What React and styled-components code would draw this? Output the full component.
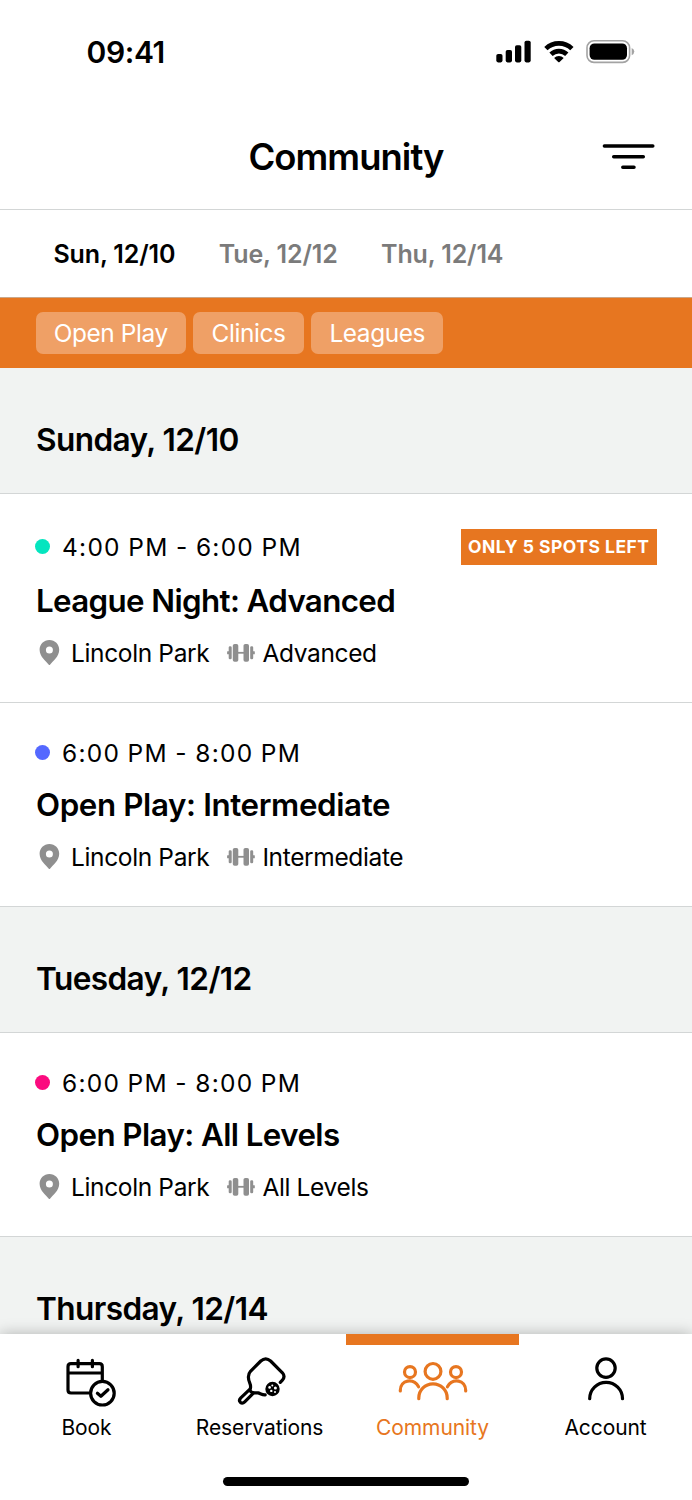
import React from "react";
import styled, { createGlobalStyle } from "styled-components";

const ORANGE = "#e77620";
const LINE = "#d3d6d6";

const GlobalStyle = createGlobalStyle`
  *, *::before, *::after { box-sizing: border-box; }
  body {
    margin: 0;
    background: #fff;
    color: #000;
    font-family: Inter, "Liberation Sans", sans-serif;
  }
`;

const Screen = styled.div`
  display: flex;
  flex-direction: column;
  width: 692px;
  height: 1500px;
  overflow: hidden;
  background: #fff;
`;

const StatusBar = styled.div`
  flex: none;
  display: flex;
  align-items: center;
  justify-content: space-between;
  height: 104px;
  padding: 0 56px 0 86.6px;
`;

const Clock = styled.span`
  font-size: 30px;
  line-height: 36px;
  font-weight: 600;
  letter-spacing: -0.4px;
`;

const StatusIcons = styled.div`
  display: flex;
  align-items: center;
  height: 24px;
  gap: 12px;
`;

const Header = styled.header`
  flex: none;
  display: grid;
  grid-template-columns: 1fr auto 1fr;
  align-items: center;
  height: 106px;
  padding: 0 36px;
  border-bottom: 1px solid ${LINE};
`;

const PageTitle = styled.h1`
  grid-column: 2;
  margin: 0;
  font-size: 36.4px;
  line-height: 44px;
  font-weight: 600;
  letter-spacing: -0.95px;
`;

const FilterButton = styled.button`
  justify-self: end;
  display: flex;
  padding: 0;
  border: 0;
  background: none;
`;

const DateTabs = styled.nav`
  flex: none;
  display: flex;
  align-items: center;
  gap: 43.5px;
  height: 88px;
  padding: 0 53.5px;
  border-bottom: 1px solid #c9a88c;
`;

const DateTab = styled.a`
  font-size: 25px;
  line-height: 32px;
  font-weight: 600;
  letter-spacing: -0.15px;
  color: ${(p) => (p.$active ? "#000" : "#7b7b7b")};
`;

const ChipBar = styled.div`
  flex: none;
  display: flex;
  align-items: center;
  gap: 7.5px;
  height: 70px;
  padding: 0 35.5px;
  background: ${ORANGE};
`;

const Chip = styled.button`
  height: 42px;
  padding: 0 18.2px;
  border: 0;
  border-radius: 7px;
  background: #efa066;
  color: #fff;
  font: 400 24.4px/42px Inter, "Liberation Sans", sans-serif;
  letter-spacing: -0.4px;
`;

const Feed = styled.main`
  flex: 1;
  min-height: 0;
  overflow: hidden;
`;

const DayHeading = styled.h2`
  margin: 0;
  height: 126px;
  padding: 51px 36px 0;
  border-bottom: 1px solid ${LINE};
  background: #f1f3f2;
  font-size: 31.6px;
  line-height: 42px;
  font-weight: 600;
  letter-spacing: -0.6px;
`;

const Event = styled.article`
  padding: 35px 35px 33px;
  border-bottom: 1px solid ${LINE};
  background: #fff;
`;

const TimeRow = styled.div`
  display: flex;
  align-items: center;
  min-height: 31px;
`;

const Dot = styled.span`
  width: 15px;
  height: 15px;
  margin: 0 12px 2px 0;
  border-radius: 50%;
  background: ${(p) => p.$color};
`;

const Time = styled.span`
  font-size: 24.5px;
  line-height: 31px;
  letter-spacing: 1.25px;
  word-spacing: -0.7px;
`;

const Badge = styled.span`
  margin-left: auto;
  height: 36px;
  padding: 0 7.5px;
  background: ${ORANGE};
  color: #fff;
  font-size: 17.5px;
  line-height: 36px;
  font-weight: 650;
  letter-spacing: 0.5px;
`;

const EventTitle = styled.h3`
  margin: 16px 0 16px 1px;
  font-size: 31.3px;
  line-height: 40px;
  font-weight: 600;
  letter-spacing: ${(p) => p.$tracking}px;
`;

const MetaRow = styled.div`
  display: flex;
  align-items: center;
  gap: 18px;
  height: 32px;
  padding-left: 4px;
`;

const Meta = styled.span`
  display: flex;
  align-items: center;
  gap: ${(p) => p.$gap}px;
  font-size: 24.5px;
  line-height: 32px;
  letter-spacing: -0.36px;
`;

const TabBar = styled.footer`
  position: relative;
  flex: none;
  height: 166px;
  background: #fff;
  box-shadow: 0 0 14px rgba(0, 0, 0, 0.27);
`;

const TabList = styled.nav`
  display: grid;
  grid-template-columns: repeat(4, 173px);
  height: 143px;
`;

const Tab = styled.a`
  display: flex;
  flex-direction: column;
  align-items: center;
  border-top: 11px solid ${(p) => (p.$active ? ORANGE : "transparent")};
  color: ${(p) => (p.$active ? ORANGE : "#000")};
`;

const TabIcon = styled.svg`
  display: block;
  height: 60px;
  width: 101px;
  margin-top: 5px;
  fill: none;
  stroke: currentColor;
  stroke-width: 3.2;
  stroke-linecap: round;
  stroke-linejoin: round;
`;

const TabLabel = styled.span`
  margin-top: 5px;
  font-size: 21px;
  line-height: 26px;
  letter-spacing: -0.1px;
`;

const HomeIndicator = styled.div`
  width: 246px;
  height: 9px;
  margin: 0 auto;
  border-radius: 5px;
  background: #000;
`;

function SignalIcon() {
  return (
    <svg width="36" height="24" viewBox="496 40 36 24">
      <rect x="496.3" y="54" width="6.2" height="8.4" rx="1.8" />
      <rect x="505.7" y="50" width="6.3" height="12.4" rx="1.8" />
      <rect x="515" y="45.3" width="6.3" height="17.1" rx="1.8" />
      <rect x="524.5" y="40.7" width="6.2" height="21.7" rx="1.8" />
    </svg>
  );
}

function WifiIcon() {
  return (
    <svg width="30" height="24" viewBox="543.5 40 30 24">
      <g fill="none" stroke="#000" strokeWidth="4.7">
        <path d="M545.4 48.6a18.600 18.600 0 0 1 26 0" />
        <path d="M550.5 54.300a11.400 11.400 0 0 1 15.800 0" />
      </g>
      <path d="M553.6 58.100a6.800 6.800 0 0 1 9.600 0l-4.100 3.800q-.7.700-1.400 0z" />
    </svg>
  );
}

function BatteryIcon() {
  return (
    <svg width="50" height="24" viewBox="586 40 50 24">
      <rect x="587" y="40.8" width="42.6" height="21.6" rx="7" fill="none" stroke="#a3a3a3" strokeWidth="1.6" />
      <rect x="589.6" y="43.4" width="37.4" height="16.4" rx="4.8" />
      <path d="M631.7 48q2.6 1.1 2.6 3.6t-2.6 3.6z" fill="#a3a3a3" />
    </svg>
  );
}

function FilterIcon() {
  return (
    <svg width="54" height="30" viewBox="602 142 54 30" stroke="#000" strokeWidth="3.5" strokeLinecap="round">
      <path d="M604.4 146.1H652.8M613.7 156.8H643.3M622.8 167.2H634" />
    </svg>
  );
}

function PinIcon() {
  return (
    <svg width="21" height="26" viewBox="39 640 21 26">
      <path
        fill="#8f8f8f"
        fillRule="evenodd"
        d="M49.4 640c-5.6 0-9.8 4.4-9.8 9.8 0 7 6.6 11.6 9 14.8q.8 1 1.6 0c2.4-3.2 9-7.8 9-14.8 0-5.4-4.2-9.8-9.8-9.8zm0 6.6a3.5 3.5 0 1 1 0 7 3.5 3.5 0 0 1 0-7z"
      />
    </svg>
  );
}

function DumbbellIcon() {
  return (
    <svg width="28" height="20" viewBox="227.5 643 28 20" fill="#8f8f8f">
      <rect x="227.6" y="651.2" width="2.4" height="3" rx=".5" />
      <rect x="229.2" y="646.2" width="3" height="13.1" rx="1.3" />
      <rect x="233.3" y="643.9" width="5.5" height="17.8" rx="1.8" />
      <rect x="238" y="651.9" width="7" height="1.8" />
      <rect x="244" y="643.9" width="5.5" height="17.8" rx="1.8" />
      <rect x="250.7" y="646.2" width="3" height="13.1" rx="1.3" />
      <rect x="252.9" y="651.2" width="2.4" height="3" rx=".5" />
    </svg>
  );
}

function BookIcon() {
  return (
    <TabIcon viewBox="36 1350 101 60">
      <path d="M88.8 1393H71q-3 0-3-3V1366.7q0-3 3-3H99.3q3 0 3 3V1380M68 1373H102.3M78.1 1360.4V1366.7M92.4 1360.4V1366.7" />
      <circle cx="102.4" cy="1393.2" r="11.8" />
      <path d="M97.4 1393.3 100.9 1396.3 108 1389.8" />
    </TabIcon>
  );
}

function PaddleIcon() {
  return (
    <TabIcon viewBox="209 1350 101 60">
      <path d="M280.3 1382.4 282.4 1380.2Q285.6 1376.6 282.4 1372.8L270.6 1361Q265.7 1356.800 260.800 1361L250.500 1371.300C247 1375.200 248.400 1379.800 249.800 1383.200Q251.400 1387 249.800 1390.300C252.500 1394.200 255 1392.300 258 1392.900C260.500 1393.600 262.400 1395 265.200 1394.800" />
      <path d="M249.2 1389.8 240.800 1397.800Q238.400 1400.200 240.300 1402.200Q242.400 1404.100 244.700 1401.800L253.400 1393.200" />
      <circle cx="272.5" cy="1389" r="7.2" fill="currentColor" stroke="none" />
      <g fill="#fff" stroke="none">
        <circle cx="269.6" cy="1387.400" r="1.3" />
        <circle cx="272.300" cy="1385.400" r="1" />
        <circle cx="275.400" cy="1388" r="1.5" />
        <circle cx="271.300" cy="1390.900" r="1.2" />
        <circle cx="275" cy="1392.100" r="1" />
      </g>
    </TabIcon>
  );
}

function CommunityIcon() {
  return (
    <TabIcon viewBox="382 1350 101 60">
      <circle cx="433" cy="1371.4" r="7.9" />
      <path d="M418.8 1398.7V1398A14.2 14.2 0 0 1 447.2 1398V1398.7" />
      <circle cx="410" cy="1372.1" r="5.5" />
      <circle cx="456" cy="1372.1" r="5.5" />
      <path d="M400.3 1391V1390.5C400.3 1379.5 413.5 1377.8 418.6 1386.8M465.7 1391V1390.5C465.7 1379.5 452.5 1377.8 447.4 1386.8" />
    </TabIcon>
  );
}

function AccountIcon() {
  return (
    <TabIcon viewBox="555 1350 101 60">
      <circle cx="606" cy="1368.1" r="9.2" />
      <path d="M589.7 1398.7A16.4 16.4 0 0 1 622.5 1398.7" />
    </TabIcon>
  );
}

const days = [
  {
    title: "Sunday, 12/10",
    events: [
      {
        color: "#05e5bf",
        time: "4:00 PM - 6:00 PM",
        title: "League Night: Advanced",
        tracking: -0.62,
        level: "Advanced",
        badge: "ONLY 5 SPOTS LEFT",
      },
      {
        color: "#5468ff",
        time: "6:00 PM - 8:00 PM",
        title: "Open Play: Intermediate",
        tracking: -0.37,
        level: "Intermediate",
      },
    ],
  },
  {
    title: "Tuesday, 12/12",
    events: [
      {
        color: "#fb0b7f",
        time: "6:00 PM - 8:00 PM",
        title: "Open Play: All Levels",
        tracking: -0.57,
        level: "All Levels",
      },
    ],
  },
  { title: "Thursday, 12/14", events: [] },
];

const tabs = [
  { label: "Book", Icon: BookIcon },
  { label: "Reservations", Icon: PaddleIcon },
  { label: "Community", Icon: CommunityIcon, active: true },
  { label: "Account", Icon: AccountIcon },
];

export default function App() {
  return (
    <>
      <GlobalStyle />
      <Screen>
        <StatusBar>
          <Clock>09:41</Clock>
          <StatusIcons>
            <SignalIcon />
            <WifiIcon />
            <BatteryIcon />
          </StatusIcons>
        </StatusBar>
        <Header>
          <PageTitle>Community</PageTitle>
          <FilterButton aria-label="Filter">
            <FilterIcon />
          </FilterButton>
        </Header>
        <DateTabs>
          <DateTab $active>Sun, 12/10</DateTab>
          <DateTab>Tue, 12/12</DateTab>
          <DateTab>Thu, 12/14</DateTab>
        </DateTabs>
        <ChipBar>
          <Chip>Open Play</Chip>
          <Chip>Clinics</Chip>
          <Chip>Leagues</Chip>
        </ChipBar>
        <Feed>
          {days.map((day) => (
            <section key={day.title}>
              <DayHeading>{day.title}</DayHeading>
              {day.events.map((event) => (
                <Event key={event.title}>
                  <TimeRow>
                    <Dot $color={event.color} />
                    <Time>{event.time}</Time>
                    {event.badge && <Badge>{event.badge}</Badge>}
                  </TimeRow>
                  <EventTitle $tracking={event.tracking}>{event.title}</EventTitle>
                  <MetaRow>
                    <Meta $gap={11}>
                      <PinIcon />
                      Lincoln Park
                    </Meta>
                    <Meta $gap={7}>
                      <DumbbellIcon />
                      {event.level}
                    </Meta>
                  </MetaRow>
                </Event>
              ))}
            </section>
          ))}
        </Feed>
        <TabBar>
          <TabList>
            {tabs.map(({ label, Icon, active }) => (
              <Tab key={label} $active={active}>
                <Icon />
                <TabLabel>{label}</TabLabel>
              </Tab>
            ))}
          </TabList>
          <HomeIndicator />
        </TabBar>
      </Screen>
    </>
  );
}
